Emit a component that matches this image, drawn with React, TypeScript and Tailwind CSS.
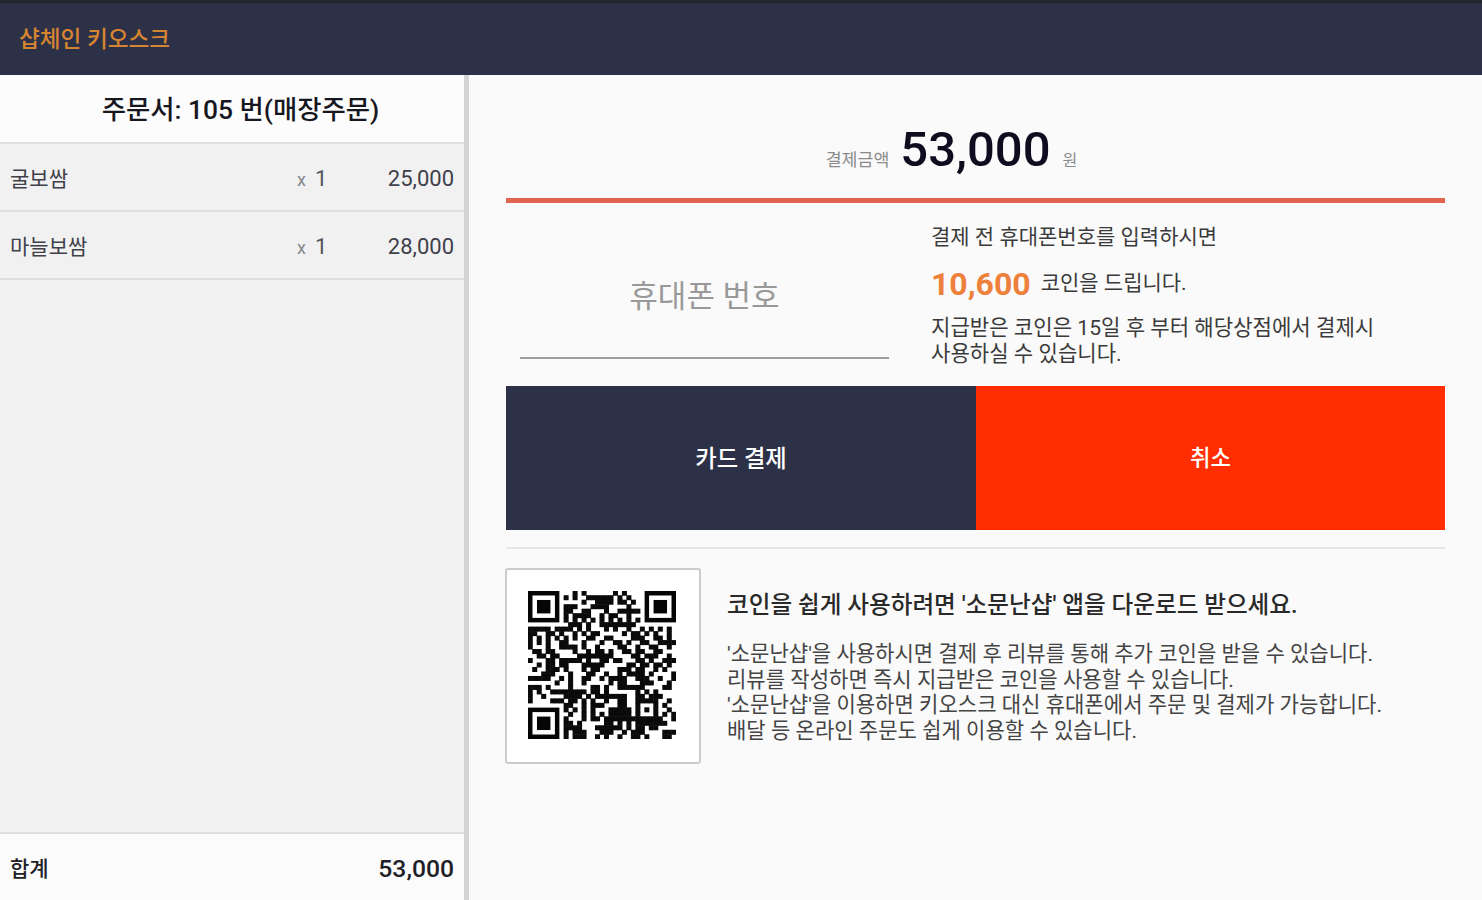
interface OrderItem {
  name: string
  count: number
  price: string
}

const items: OrderItem[] = [
  { name: "굴보쌈", count: 1, price: "25,000" },
  { name: "마늘보쌈", count: 1, price: "28,000" },
]

// dark modules of each row, without the three finder squares
const qrModules: number[][] = [
  [10, 12, 19, 21],
  [8, 10, 13, 14, 15, 16, 17, 18, 20, 22],
  [12, 15, 16, 17, 18, 20, 21, 23],
  [8, 9, 10, 14, 15, 16, 17, 22],
  [8, 9, 12, 13, 17, 20, 21, 22, 23, 24],
  [8, 10, 11, 12, 13, 16, 18, 19, 22],
  [8, 10, 12, 14, 16, 18, 20, 22, 24],
  [9, 10, 11, 13, 16, 17, 18, 19, 20, 21, 22, 23],
  [0, 1, 2, 3, 4, 6, 7, 8, 9, 11, 13, 17, 19, 22, 25, 27, 29, 31],
  [0, 1, 4, 5, 7, 10, 12, 14, 15, 21, 23, 24, 26, 28, 31],
  [0, 2, 4, 6, 8, 10, 13, 14, 17, 18, 23, 24, 25, 28, 29, 31],
  [0, 2, 4, 7, 8, 12, 16, 19, 20, 22, 25, 26, 29, 30, 31, 32],
  [0, 4, 7, 8, 9, 10, 12, 15, 20, 21, 24, 27, 28, 31],
  [1, 2, 4, 5, 10, 13, 15, 16, 18, 21, 22, 24, 25, 28, 29],
  [2, 3, 5, 6, 11, 12, 13, 14, 15, 16, 17, 18, 23, 24, 26, 27, 28, 31],
  [0, 4, 5, 7, 8, 9, 10, 11, 13, 16, 17, 19, 20, 24, 25, 27, 30, 31, 32],
  [2, 4, 5, 7, 8, 12, 13, 14, 15, 16, 22, 23, 25, 26, 28, 29, 31],
  [1, 4, 5, 6, 8, 12, 14, 15, 20, 21, 22, 24, 25, 28, 30],
  [3, 4, 5, 9, 13, 14, 17, 20, 22, 23, 24, 25, 27, 32],
  [0, 1, 2, 3, 4, 7, 9, 12, 13, 16, 18, 19, 20, 21, 24, 25, 26, 29, 32],
  [6, 9, 12, 18, 20, 21, 25, 26, 27, 31],
  [0, 1, 2, 4, 9, 14, 15, 17, 20, 21, 22, 23, 24, 25, 30, 31],
  [0, 2, 5, 6, 7, 8, 9, 10, 11, 12, 14, 15, 17, 24, 26, 28],
  [0, 3, 8, 9, 10, 11, 13, 15, 16, 17, 18, 19, 20, 21, 24, 25, 27, 28, 29],
  [0, 5, 6, 7, 9, 10, 12, 14, 17, 20, 21, 24, 25, 26, 27, 28, 31],
  [8, 9, 12, 14, 15, 16, 20, 21, 24, 28, 30],
  [8, 10, 12, 14, 18, 19, 20, 21, 22, 24, 26, 28, 31],
  [9, 12, 14, 16, 18, 19, 20, 21, 22, 24, 28, 30, 32],
  [8, 12, 14, 15, 17, 18, 19, 20, 21, 22, 23, 24, 25, 26, 27, 28, 29, 32],
  [8, 9, 11, 17, 18, 20, 22, 24, 25, 26, 27, 28, 29, 30],
  [8, 9, 10, 11, 15, 16, 17, 18, 19, 20, 22, 24, 25, 27, 28],
  [8, 10, 11, 12, 16, 17, 18, 21, 23, 24, 25, 30, 31, 32],
  [8, 10, 11, 12, 15, 17, 20, 23, 24, 26, 30, 31],
]

const finders = [[0, 0], [26, 0], [0, 26]]

function QrCode() {
  return (
    <svg className="h-[148px] w-[148px]" viewBox="0 0 33 33">
      {finders.map(([x, y]) => (
        <g key={`${x}-${y}`}>
          <rect x={x + 0.5} y={y + 0.5} width="6" height="6" fill="none" stroke="#050505" />
          <rect x={x + 2} y={y + 2} width="3" height="3" fill="#050505" />
        </g>
      ))}
      {qrModules.map((cols, y) =>
        cols.map((x) => <rect key={`${x}-${y}`} x={x - 0.06} y={y - 0.06} width="1.12" height="1.12" fill="#0a0a0a" />)
      )}
    </svg>
  )
}

function OrderPanel() {
  return (
    <aside className="flex w-[469px] shrink-0 flex-col border-r-[5px] border-[#d4d4d5] bg-[#f1f1f1]">
      <h2 className="flex h-[69px] items-center justify-center border-b-2 border-[#e0e0e0] bg-[#fcfcfc] pl-[17px] pt-[5px] text-[26.4px] font-medium text-[#17171f]">
        주문서: 105 번(매장주문)
      </h2>
      <ul className="flex-1">
        {items.map((item) => (
          <li
            key={item.name}
            className="flex h-[68px] items-center border-b-2 border-[#dedede] px-[10px] pt-[2px] text-[22px] text-[#40404a]"
          >
            <span className="flex-1 pt-[3px] text-[21px]">{item.name}</span>
            <span className="w-[32px] text-[#55555c]">
              <span className="mr-[9px] text-[18px] text-[#85858a]">x</span>
              {item.count}
            </span>
            <span className="w-[125px] text-right">{item.price}</span>
          </li>
        ))}
      </ul>
      <div className="flex h-[68px] items-center justify-between border-t-2 border-[#dedede] bg-[#fbfbfb] px-[10px] pt-[4px] font-medium text-[#202027]">
        <span className="pt-[2px] text-[21px]">합계</span>
        <span className="text-[24.7px]">53,000</span>
      </div>
    </aside>
  )
}

function PaymentPanel() {
  return (
    <main className="flex-1 px-[37px]">
      <div className="flex h-[123px] items-baseline justify-center pr-[48px] pt-[46px] text-[#8a8a8a]">
        <span className="text-[17.3px]">결제금액</span>
        <strong className="ml-[11px] mr-[12px] text-[49px] font-medium leading-[58px] text-[#0d0d1f]">53,000</strong>
        <span className="text-[16px]">원</span>
      </div>
      <div className="h-[5px] bg-[#e06450]" />

      <div className="flex h-[183px]">
        <div className="ml-[14px] mt-[33px] flex h-[123px] w-[369px] items-center justify-center border-b-2 border-[#9c9c9c] pt-[2px] text-[31px] text-[#999]">
          휴대폰 번호
        </div>
        <div className="ml-[42px] pt-[19px] text-[21px] text-[#3a3a3a]">
          <p className="leading-[30px]">결제 전 휴대폰번호를 입력하시면</p>
          <p className="mt-[11px] flex h-[42px] items-center">
            <strong className="mr-[10px] text-[32px] font-bold text-[#ed813b]">10,600</strong>
            코인을 드립니다.
          </p>
          <p className="mt-[10px] text-[21.1px] leading-[26px]">
            지급받은 코인은 15일 후 부터 해당상점에서 결제시
            <br />
            사용하실 수 있습니다.
          </p>
        </div>
      </div>

      <div className="flex h-[144px] pt-0 font-medium text-white">
        <button className="w-[470px] bg-[#2d3147] pt-[2px] text-[23.3px]">카드 결제</button>
        <button className="flex-1 bg-[#ff2d00] pt-[2px] text-[22.3px]">취소</button>
      </div>

      <div className="mt-[17px] h-[2px] bg-[#e7e7e7]" />

      <div className="-ml-px mt-[19px] flex">
        <div className="flex h-[196px] w-[196px] items-center justify-center rounded-[3px] border-2 border-[#cbcbcb] bg-white pb-[2px] pr-[2px]">
          <QrCode />
        </div>
        <div className="ml-[26px] pt-[22px] text-[#444]">
          <h3 className="text-[23.6px] font-medium leading-[30px] text-[#292929]">
            코인을 쉽게 사용하려면 '소문난샵' 앱을 다운로드 받으세요.
          </h3>
          <p className="mt-[21px] whitespace-nowrap text-[21.05px] leading-[25.7px]">
            '소문난샵'을 사용하시면 결제 후 리뷰를 통해 추가 코인을 받을 수 있습니다.
            <br />
            리뷰를 작성하면 즉시 지급받은 코인을 사용할 수 있습니다.
            <br />
            '소문난샵'을 이용하면 키오스크 대신 휴대폰에서 주문 및 결제가 가능합니다.
            <br />
            배달 등 온라인 주문도 쉽게 이용할 수 있습니다.
          </p>
        </div>
      </div>
    </main>
  )
}

export default function App() {
  return (
    <div className="flex h-[900px] w-[1482px] flex-col overflow-hidden bg-[#fafafa] font-['Roboto','Noto_Sans_CJK_KR',sans-serif]">
      <header className="flex h-[75px] shrink-0 items-center border-t-[3px] border-[#23262f] bg-[#2d3147] pl-[19px] pt-[2px]">
        <h1 className="text-[22.6px] font-medium text-[#d58531]">샵체인 키오스크</h1>
      </header>
      <div className="flex min-h-0 flex-1">
        <OrderPanel />
        <PaymentPanel />
      </div>
    </div>
  )
}
